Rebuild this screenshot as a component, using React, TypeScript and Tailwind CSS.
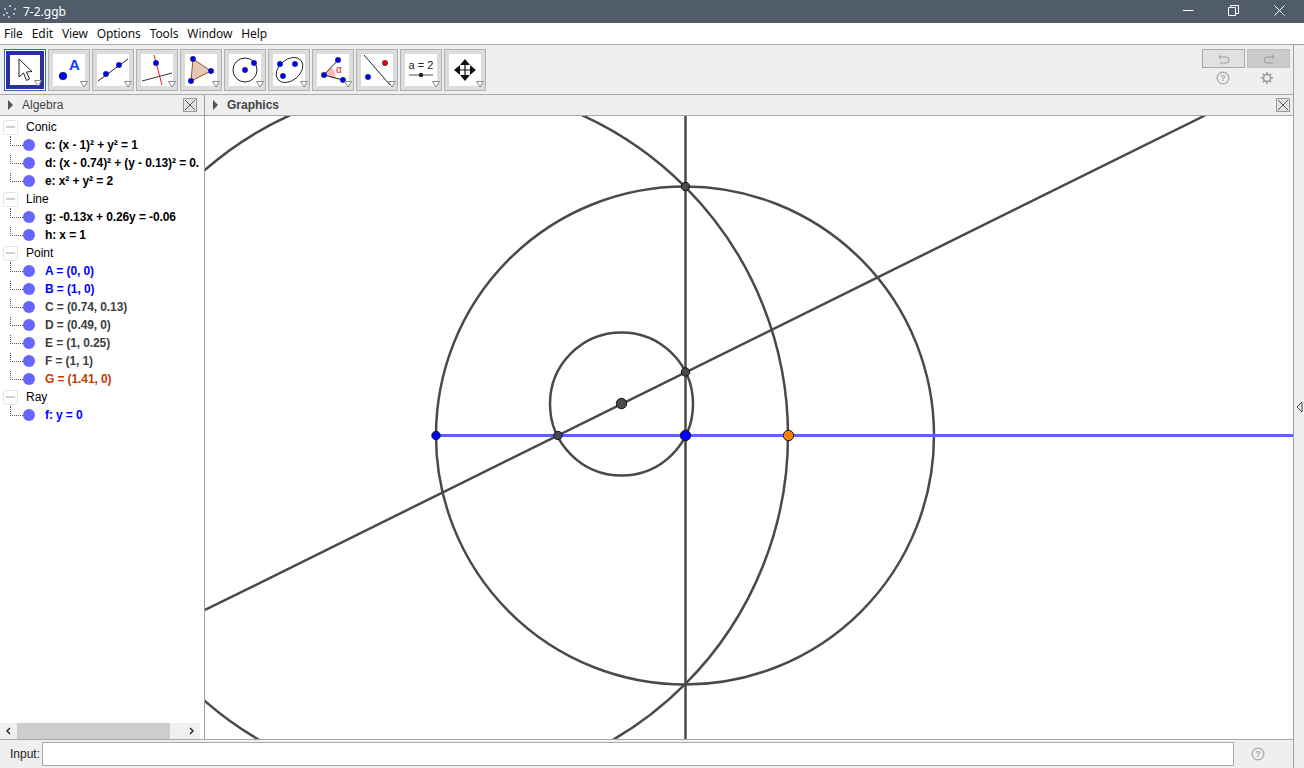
import React from "react";

function Dot({ x, y, c = "#0000ff", r = 2.7 }: { x: number; y: number; c?: string; r?: number }) {
  return <circle cx={x} cy={y} r={r} fill={c} stroke="#222" strokeWidth={0.5} />;
}

const icons: React.ReactNode[] = [
  <g key="0"><path d="M10 5 L10 23 L14.5 19 L17.5 26.5 L20.5 25 L17.5 18 L23 17.5 Z" fill="#fff" stroke="#222" strokeWidth={1} /></g>,
  <g key="1"><circle cx={10} cy={22} r={3.8} fill="#0000ff" stroke="#111" strokeWidth={0.6} /><text x={16} y={16} fontSize={15} fontWeight={700} fill="#0a3cff" fontFamily="Liberation Sans, sans-serif">A</text></g>,
  <g key="2"><line x1={1} y1={27} x2={31} y2={5} stroke="#222" /><Dot x={9} y={20} /><Dot x={22} y={11} /></g>,
  <g key="3"><line x1={1} y1={27} x2={31} y2={19} stroke="#333" /><line x1={13} y1={1} x2={21} y2={31} stroke="#e02020" /><Dot x={15} y={9} /></g>,
  <g key="4"><polygon points="8,5 26,17 6,27" fill="#e6c8b8" stroke="#9a5020" /><Dot x={8} y={5} /><Dot x={26} y={17} /><Dot x={6} y={27} /></g>,
  <g key="5"><circle cx={16} cy={16} r={12} fill="none" stroke="#222" /><Dot x={16} y={16} /><Dot x={25} y={9} /></g>,
  <g key="6"><ellipse cx={16.5} cy={16} rx={15} ry={10.5} transform="rotate(-40 16.5 16)" fill="none" stroke="#222" strokeWidth={0.9} /><Dot x={7} y={10} /><Dot x={22} y={10} /><Dot x={10} y={22} /></g>,
  <g key="7"><path d="M7 21 L14 13 A11 11 0 0 1 18 25 Z" fill="#f9bcbc" /><line x1={7} y1={21} x2={21} y2={6} stroke="#222" /><line x1={7} y1={21} x2={26} y2={26} stroke="#222" /><Dot x={7} y={21} /><Dot x={21} y={6} /><Dot x={26} y={26} /><text x={19} y={19} fontSize={10} fill="#e02020" fontFamily="Liberation Sans, sans-serif">α</text></g>,
  <g key="8"><line x1={3} y1={1} x2={29} y2={31} stroke="#222" /><Dot x={24} y={9} c="#f00000" /><Dot x={7} y={23} /></g>,
  <g key="9"><text x={16} y={15} textAnchor="middle" fontSize={11} fill="#222" fontFamily="Liberation Sans, sans-serif">a = 2</text><line x1={4} y1={21} x2={28} y2={21} stroke="#555" /><circle cx={16} cy={21} r={2.2} fill="#222" /></g>,
  <g key="10"><path d="M16 5 L21 11 L11 11 Z M16 27 L21 21 L11 21 Z M5 16 L11 11 L11 21 Z M27 16 L21 11 L21 21 Z" fill="#111" /><path d="M16 9 V23 M9 16 H23" stroke="#111" strokeWidth={1.2} /></g>,
];

function ToolButton({ icon, active }: { icon: React.ReactNode; active?: boolean }) {
  if (active) {
    return (
      <div className="relative w-[42px] h-[42px] border border-[#2a6cae] p-px bg-white">
        <div className="w-full h-full border-[4px] border-[#2b2f9f] bg-white">
          <svg width={32} height={32} viewBox="0 0 32 32" className="-ml-px -mt-px">{icon}</svg>
        </div>
        <svg width={8} height={7} className="absolute right-[3px] bottom-[3px]"><path d="M0.5 0.5 H7.5 L4 6 Z" fill="#fff" stroke="#888" /></svg>
      </div>
    );
  }
  return (
    <div className="relative w-[42px] h-[42px] border border-[#b0b0b0] bg-[#dcdcdc] p-[4px]">
      <div className="w-[32px] h-[32px] bg-white">
        <svg width={32} height={32} viewBox="0 0 32 32">{icon}</svg>
      </div>
      <svg width={8} height={7} className="absolute right-[1px] bottom-[2px]"><path d="M0.5 0.5 H7.5 L4 6 Z" fill="#fff" stroke="#888" /></svg>
    </div>
  );
}

function HelpIcon() {
  return (
    <svg width={14} height={14} viewBox="0 0 14 14">
      <circle cx={7} cy={7} r={5.8} fill="none" stroke="#aaa" strokeWidth={1.3} />
      <text x={7} y={10} textAnchor="middle" fontSize={9} fontWeight={700} fill="#aaa" fontFamily="Liberation Sans, sans-serif">?</text>
    </svg>
  );
}

function CloseBox() {
  return (
    <svg width={14} height={14} viewBox="0 0 14 14" className="block">
      <rect x={0.5} y={0.5} width={13} height={13} fill="#e4e4e4" stroke="#999" />
      <path d="M2 2 L12 12 M12 2 L2 12" stroke="#555" />
    </svg>
  );
}

function Tri() {
  return <svg width={7} height={10} viewBox="0 0 7 10"><path d="M1 0 L6 5 L1 10 Z" fill="#555" /></svg>;
}

type Row = { t: string; c: string };
const groups: { name: string; rows: Row[] }[] = [
  { name: "Conic", rows: [
    { t: "c: (x - 1)² + y² = 1", c: "text-black" },
    { t: "d: (x - 0.74)² + (y - 0.13)² = 0.51", c: "text-black" },
    { t: "e: x² + y² = 2", c: "text-black" },
  ] },
  { name: "Line", rows: [
    { t: "g: -0.13x + 0.26y = -0.06", c: "text-black" },
    { t: "h: x = 1", c: "text-black" },
  ] },
  { name: "Point", rows: [
    { t: "A = (0, 0)", c: "text-[#0000ff]" },
    { t: "B = (1, 0)", c: "text-[#0000ff]" },
    { t: "C = (0.74, 0.13)", c: "text-[#404040]" },
    { t: "D = (0.49, 0)", c: "text-[#404040]" },
    { t: "E = (1, 0.25)", c: "text-[#404040]" },
    { t: "F = (1, 1)", c: "text-[#404040]" },
    { t: "G = (1.41, 0)", c: "text-[#c23a00]" },
  ] },
  { name: "Ray", rows: [{ t: "f: y = 0", c: "text-[#0000ff]" }] },
];

function Group({ name, rows }: { name: string; rows: Row[] }) {
  return (
    <div>
      <div className="flex items-center h-[18px]">
        <div className="ml-[3px] w-[15px] h-[15px] border border-[#e6e6e6] rounded-[2px] flex items-center justify-center">
          <div className="w-[9px] h-[2px] bg-[#cfcfcf]" />
        </div>
        <span className="ml-[8px] text-[12px] text-black">{name}</span>
      </div>
      {rows.map((r, i) => (
        <div key={r.t} className="relative flex items-center h-[18px] w-[199px] overflow-hidden">
          <div className={`absolute left-[10px] w-[13px] border-l border-b border-dotted border-[#555] ${i === 0 ? "h-[10px] top-0" : "h-[19px] top-[-9px]"}`} />
          <div className="ml-[23px] w-[12px] h-[12px] rounded-full bg-[#6666ff] shrink-0 relative" />
          <span className={`ml-[10px] text-[12px] font-bold tracking-[-0.1px] whitespace-nowrap ${r.c}`}>{r.t}</span>
        </div>
      ))}
    </div>
  );
}

function Graphics() {
  // drawn in page coordinates; the svg itself starts at (205,116)
  const stroke = "#4a4a4a";
  const w = 2.5;
  return (
    <svg width={1088} height={623} viewBox="205 116 1088 623" className="block bg-white">
      <circle cx={685} cy={435.5} r={249} fill="none" stroke={stroke} strokeWidth={w} />
      <circle cx={436} cy={435.5} r={352} fill="none" stroke={stroke} strokeWidth={w} />
      <circle cx={621.5} cy={404} r={71.5} fill="none" stroke={stroke} strokeWidth={w} />
      <line x1={685.5} y1={116} x2={685.5} y2={739} stroke={stroke} strokeWidth={w} />
      <line x1={205} y1={610} x2={1205} y2={115.5} stroke={stroke} strokeWidth={w} />
      <line x1={436} y1={435.5} x2={1293} y2={435.5} stroke="#6060ff" strokeWidth={2.8} />
      <circle cx={436} cy={435.5} r={4.2} fill="#0000ff" stroke="#111" />
      <circle cx={558} cy={435.5} r={4.2} fill="#4a4a4a" stroke="#111" />
      <circle cx={685.5} cy={435.5} r={5.2} fill="#0000ff" stroke="#111" />
      <circle cx={788.5} cy={435.5} r={5.2} fill="#ff7f00" stroke="#111" />
      <circle cx={685.5} cy={372} r={4.2} fill="#4a4a4a" stroke="#111" />
      <circle cx={685.5} cy={186.5} r={4.2} fill="#4a4a4a" stroke="#111" />
      <circle cx={621.5} cy={403.5} r={5.2} fill="#4a4a4a" stroke="#111" />
    </svg>
  );
}

export default function App() {
  return (
    <div className="w-[1304px] h-[768px] flex flex-col overflow-hidden bg-white font-['Liberation_Sans',sans-serif]">
      {/* Title bar */}
      <div className="h-[23px] bg-[#505c6a] flex items-center shrink-0">
        <svg width={16} height={16} viewBox="0 0 16 16" className="ml-[2px]">
          {[[8, 2], [3, 5], [13, 5], [2, 11], [12, 10], [7, 13], [5, 9]].map(([x, y]) => (
            <circle key={`${x}-${y}`} cx={x} cy={y} r={1} fill="#c8d2e8" />
          ))}
        </svg>
        <span className="ml-[5px] text-[12px] text-white font-['Noto_Sans',sans-serif]">7-2.ggb</span>
        <div className="ml-auto flex items-center -mt-[3px]">
          <svg width={11} height={11} viewBox="0 0 11 11" className="mr-[34px]"><path d="M0 5.5 H10.5" stroke="#fff" /></svg>
          <svg width={11} height={11} viewBox="0 0 11 11" className="mr-[35px]"><path d="M0.5 2.5 H7.5 V10.5 H0.5 Z M2.5 2.5 V0.5 H10.5 V8.5 H7.5" fill="none" stroke="#fff" /></svg>
          <svg width={11} height={11} viewBox="0 0 11 11" className="mr-[19px]"><path d="M0.5 0.5 L10.5 10.5 M10.5 0.5 L0.5 10.5" stroke="#fff" /></svg>
        </div>
      </div>
      {/* Menu */}
      <div className="h-[21px] shrink-0 flex items-center text-[12px] tracking-[-0.1px] text-[#111] pl-[4px] gap-[9px] font-['Noto_Sans',sans-serif]">
        {["File", "Edit", "View", "Options", "Tools", "Window", "Help"].map((m) => (
          <span key={m}>{m}</span>
        ))}
      </div>
      <div className="flex-1 flex min-h-0">
        <div className="flex-1 flex flex-col min-w-0">
          {/* Toolbar */}
          <div className="h-[51px] shrink-0 border-y border-[#a8a8a8] bg-[#efefef] flex pl-[4px] pt-[4px] gap-[2px]">
            {icons.map((ic, i) => (
              <ToolButton key={i} icon={ic} active={i === 0} />
            ))}
            <div className="ml-auto mr-[3px] -mt-px flex flex-col">
              <div className="flex gap-[2px] mt-[1px]">
                <div className="w-[43px] h-[19px] border border-[#a9a9a9] bg-[#e1e1e1] flex items-center justify-center">
                  <svg width={12} height={10} viewBox="0 0 12 10"><path d="M3 1 L1 3 L3 5 M1 3 H8 A3 3 0 0 1 8 9 H2" fill="none" stroke="#999" /></svg>
                </div>
                <div className="w-[43px] h-[19px] border border-[#c0c0c0] bg-[#cbcbcb] flex items-center justify-center">
                  <svg width={12} height={10} viewBox="0 0 12 10"><path d="M9 1 L11 3 L9 5 M11 3 H4 A3 3 0 0 0 4 9 H10" fill="none" stroke="#999" /></svg>
                </div>
              </div>
              <div className="flex mt-[3px]">
                <div className="w-[42px] flex justify-center"><HelpIcon /></div>
                <div className="w-[46px] flex justify-center">
                  <svg width={14} height={14} viewBox="0 0 14 14">
                    <circle cx={7} cy={7} r={3.5} fill="none" stroke="#999" strokeWidth={1.5} />
                    <path d="M7 1 V3 M7 11 V13 M1 7 H3 M11 7 H13 M2.8 2.8 L4.2 4.2 M9.8 9.8 L11.2 11.2 M2.8 11.2 L4.2 9.8 M9.8 4.2 L11.2 2.8" stroke="#999" strokeWidth={1.5} />
                  </svg>
                </div>
              </div>
            </div>
          </div>
          {/* Panels */}
          <div className="flex-1 flex min-h-0">
            <div className="w-[205px] shrink-0 border-r border-[#a0a0a0] flex flex-col">
              <div className="h-[21px] shrink-0 bg-[#efefef] border-b border-[#a8a8a8] flex items-center pl-[7px] pr-[7px]">
                <Tri />
                <span className="ml-[8px] text-[12px] text-[#444]">Algebra</span>
                <div className="ml-auto"><CloseBox /></div>
              </div>
              <div className="flex-1 min-h-0 pt-[2px] overflow-hidden bg-white">
                {groups.map((g) => (
                  <Group key={g.name} name={g.name} rows={g.rows} />
                ))}
              </div>
              <div className="h-[16px] w-[200px] shrink-0 flex items-center bg-[#f0f0f0]">
                <svg width={17} height={16} viewBox="0 0 17 16"><path d="M10 5 L7 8 L10 11" fill="none" stroke="#333" strokeWidth={1.5} /></svg>
                <div className="w-[153px] h-full bg-[#cdcdcd]" />
                <svg width={30} height={16} viewBox="0 0 30 16"><path d="M20 5 L23 8 L20 11" fill="none" stroke="#333" strokeWidth={1.5} /></svg>
              </div>
            </div>
            <div className="flex-1 flex flex-col min-w-0">
              <div className="h-[21px] shrink-0 bg-[#efefef] border-b border-[#a8a8a8] flex items-center pl-[7px] pr-[3px]">
                <Tri />
                <span className="ml-[8px] text-[12px] font-bold text-[#444]">Graphics</span>
                <div className="ml-auto"><CloseBox /></div>
              </div>
              <Graphics />
            </div>
          </div>
          {/* Input bar */}
          <div className="h-[29px] shrink-0 border-t border-[#a8a8a8] bg-[#efefef] flex items-center pl-[10px]">
            <span className="text-[12px] text-[#222] w-[32px]">Input:</span>
            <div className="w-[1192px] h-[24px] border border-[#a8a8a8] bg-white" />
            <div className="ml-[17px]"><HelpIcon /></div>
          </div>
        </div>
        {/* Right strip */}
        <div className="w-[11px] shrink-0 border-l border-t border-[#a0a0a0] bg-[#efefef] relative">
          <svg width={7} height={12} viewBox="0 0 7 12" className="absolute left-[2px] top-[356px]"><path d="M6 1 L1 6 L6 11 Z" fill="#efefef" stroke="#444" /></svg>
        </div>
      </div>
    </div>
  );
}
